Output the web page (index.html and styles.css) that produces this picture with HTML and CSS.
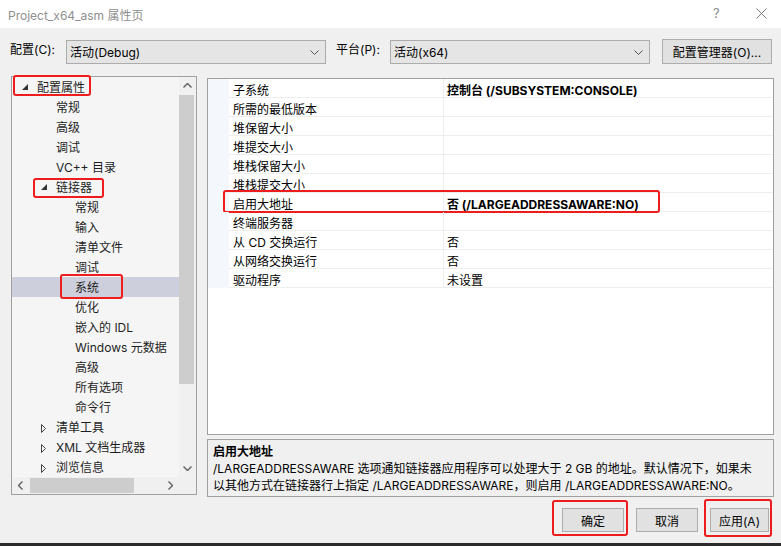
FILE: index.html
```html
<!DOCTYPE html>
<html lang="zh-CN">
<head>
    <meta charset="UTF-8">
    <title>Project_x64_asm 属性页</title>
    <link rel="stylesheet" href="styles.css">
</head>
<body>
    <div class="dialog">
        <div class="titlebar">
            <span class="title">Project_x64_asm 属性页</span>
            <span class="title-help">?</span>
            <span class="title-close">
                <svg width="11" height="11" viewBox="0 0 11 11"><path d="M0.5 0.5 L10.5 10.5 M10.5 0.5 L0.5 10.5" stroke="#7a7a7a" stroke-width="1" fill="none"/></svg>
            </span>
        </div>

        <div class="toolbar">
            <span class="tb-label tb-label-config">配置(C):</span>
            <div class="combo">
                <span>活动(Debug)</span>
                <svg class="chevron" width="9" height="5" viewBox="0 0 9 5"><path d="M0.5 0.5 L4.5 4.5 L8.5 0.5" stroke="#555" fill="none"/></svg>
            </div>
            <span class="tb-label tb-label-platform">平台(P):</span>
            <div class="combo">
                <span>活动(x64)</span>
                <svg class="chevron" width="9" height="5" viewBox="0 0 9 5"><path d="M0.5 0.5 L4.5 4.5 L8.5 0.5" stroke="#555" fill="none"/></svg>
            </div>
            <button class="btn btn-manager">配置管理器(O)...</button>
        </div>

        <div class="main">
            <div class="tree">
                <div class="tree-body">
                    <ul class="tree-list">
                        <li class="lvl0"><span class="twisty"><svg width="6" height="6" viewBox="0 0 6 6"><path d="M6 0 L6 6 L0 6 Z" fill="#333"/></svg></span>配置属性<span class="mark mark-root"></span></li>
                        <li class="lvl1">常规</li>
                        <li class="lvl1">高级</li>
                        <li class="lvl1">调试</li>
                        <li class="lvl1">VC++ 目录</li>
                        <li class="lvl1 has-twisty"><span class="twisty"><svg width="6" height="6" viewBox="0 0 6 6"><path d="M6 0 L6 6 L0 6 Z" fill="#333"/></svg></span>链接器<span class="mark mark-linker"></span></li>
                        <li class="lvl2">常规</li>
                        <li class="lvl2">输入</li>
                        <li class="lvl2">清单文件</li>
                        <li class="lvl2">调试</li>
                        <li class="lvl2 selected">系统<span class="mark mark-system"></span></li>
                        <li class="lvl2">优化</li>
                        <li class="lvl2">嵌入的 IDL</li>
                        <li class="lvl2">Windows 元数据</li>
                        <li class="lvl2">高级</li>
                        <li class="lvl2">所有选项</li>
                        <li class="lvl2">命令行</li>
                        <li class="lvl1 has-twisty"><span class="twisty"><svg class="closed" width="6" height="9" viewBox="0 0 6 9"><path d="M0.5 0.5 L4.5 4.5 L0.5 8.5 Z" stroke="#444" fill="none"/></svg></span>清单工具</li>
                        <li class="lvl1 has-twisty"><span class="twisty"><svg class="closed" width="6" height="9" viewBox="0 0 6 9"><path d="M0.5 0.5 L4.5 4.5 L0.5 8.5 Z" stroke="#444" fill="none"/></svg></span>XML 文档生成器</li>
                        <li class="lvl1 has-twisty"><span class="twisty"><svg class="closed" width="6" height="9" viewBox="0 0 6 9"><path d="M0.5 0.5 L4.5 4.5 L0.5 8.5 Z" stroke="#444" fill="none"/></svg></span>浏览信息</li>
                    </ul>
                    <div class="vscroll">
                        <div class="sb-arrow"><svg width="9" height="5" viewBox="0 0 9 5"><path d="M0.5 4.5 L4.5 0.5 L8.5 4.5" stroke="#606060" stroke-width="1.4" fill="none"/></svg></div>
                        <div class="vthumb"></div>
                        <div class="sb-arrow sb-arrow-down"><svg width="9" height="5" viewBox="0 0 9 5"><path d="M0.5 0.5 L4.5 4.5 L8.5 0.5" stroke="#606060" stroke-width="1.4" fill="none"/></svg></div>
                    </div>
                </div>
                <div class="hscroll">
                    <div class="sb-arrow-h"><svg width="5" height="9" viewBox="0 0 5 9"><path d="M4.5 0.5 L0.5 4.5 L4.5 8.5" stroke="#606060" stroke-width="1.4" fill="none"/></svg></div>
                    <div class="htrack"><div class="hthumb"></div></div>
                    <div class="sb-arrow-h"><svg width="5" height="9" viewBox="0 0 5 9"><path d="M0.5 0.5 L4.5 4.5 L0.5 8.5" stroke="#606060" stroke-width="1.4" fill="none"/></svg></div>
                    <div class="sb-corner"></div>
                </div>
            </div>

            <div class="right">
                <div class="grid">
                    <div class="grid-row"><span class="gutter"></span><span class="cell name">子系统</span><span class="cell value bold">控制台 (/SUBSYSTEM:CONSOLE)</span></div>
                    <div class="grid-row"><span class="gutter"></span><span class="cell name">所需的最低版本</span><span class="cell value"></span></div>
                    <div class="grid-row"><span class="gutter"></span><span class="cell name">堆保留大小</span><span class="cell value"></span></div>
                    <div class="grid-row"><span class="gutter"></span><span class="cell name">堆提交大小</span><span class="cell value"></span></div>
                    <div class="grid-row"><span class="gutter"></span><span class="cell name">堆栈保留大小</span><span class="cell value"></span></div>
                    <div class="grid-row"><span class="gutter"></span><span class="cell name">堆栈提交大小</span><span class="cell value"></span></div>
                    <div class="grid-row"><span class="gutter"></span><span class="cell name">启用大地址</span><span class="cell value bold">否 (/LARGEADDRESSAWARE:NO)</span><span class="mark mark-row"></span></div>
                    <div class="grid-row"><span class="gutter"></span><span class="cell name">终端服务器</span><span class="cell value"></span></div>
                    <div class="grid-row"><span class="gutter"></span><span class="cell name">从 CD 交换运行</span><span class="cell value">否</span></div>
                    <div class="grid-row"><span class="gutter"></span><span class="cell name">从网络交换运行</span><span class="cell value">否</span></div>
                    <div class="grid-row"><span class="gutter"></span><span class="cell name">驱动程序</span><span class="cell value">未设置</span></div>
                </div>
                <div class="desc">
                    <div class="desc-title">启用大地址</div>
                    <div class="desc-text">/LARGEADDRESSAWARE 选项通知链接器应用程序可以处理大于 2 GB 的地址。默认情况下，如果未<br>以其他方式在链接器行上指定 /LARGEADDRESSAWARE，则启用 /LARGEADDRESSAWARE:NO。</div>
                </div>
            </div>
        </div>

        <div class="footer">
            <button class="btn btn-ok">确定<span class="mark mark-ok"></span></button>
            <button class="btn btn-cancel">取消</button>
            <button class="btn btn-apply">应用(A)<span class="mark mark-apply"></span></button>
        </div>
        <div class="taskbar-edge"></div>
    </div>
</body>
</html>
```

FILE: styles.css
```css
html, body {
    margin: 0;
    padding: 0;
    background-color: #f0f0f0;
    font-family: Inter, "Noto Sans CJK SC", sans-serif;
    font-size: 12px;
    color: #000;
}

.dialog {
    width: 781px;
    height: 546px;
    display: flex;
    flex-direction: column;
    overflow: hidden;
}

/* title bar */
.titlebar {
    height: 28px;
    background-color: #ffffff;
    display: flex;
    align-items: center;
    padding-left: 8px;
    flex-shrink: 0;
}
.title {
    color: #8f8f8f;
    font-size: 12px;
    flex: 1;
}
.title-help {
    color: #8a8a8a;
    font-size: 13px;
    width: 12px;
    margin-right: 31px;
    margin-top: -3px;
}
.title-close {
    width: 11px;
    height: 11px;
    margin-right: 14px;
    margin-top: -2px;
    display: flex;
}

/* config row */
.toolbar {
    display: flex;
    align-items: flex-start;
    padding: 12px 0 0 10px;
    height: 24px;
    flex-shrink: 0;
}
.tb-label {
    line-height: 19px;
}
.tb-label-config {
    width: 56px;
}
.tb-label-platform {
    width: 54px;
    margin-left: 10px;
}
.combo {
    width: 260px;
    height: 24px;
    box-sizing: border-box;
    border: 1px solid #acacac;
    background-color: #e5e5e5;
    display: flex;
    align-items: center;
    justify-content: space-between;
    padding: 0 6px 0 3px;
}
.combo span {
    line-height: 20px;
    margin-top: 1px;
}
.btn {
    font-family: inherit;
    font-size: 12px;
    background-color: #e1e1e1;
    border: 1px solid #adadad;
    color: #000;
    padding: 0;
    box-sizing: border-box;
    position: relative;
}
.btn-manager {
    width: 110px;
    height: 25px;
    margin-left: 12px;
    margin-top: -1px;
}

/* main area */
.main {
    display: flex;
    padding-left: 11px;
    margin-top: 12px;
    flex-shrink: 0;
}

.tree {
    width: 186px;
    height: 419px;
    box-sizing: border-box;
    border: 1px solid #a0a0a0;
    background-color: #f5f5f5;
    display: flex;
    flex-direction: column;
}
.tree-body {
    flex: 1;
    display: flex;
    min-height: 0;
}
.tree-list {
    list-style: none;
    margin: 0;
    padding: 0;
    flex: 1;
}
.tree-list li {
    height: 20px;
    line-height: 22px;
    display: flex;
    align-items: flex-start;
    position: relative;
    color: #1e1e1e;
    white-space: nowrap;
}
.tree-list li.lvl0 { padding-left: 10px; }
.tree-list li.lvl1 { padding-left: 44px; }
.tree-list li.lvl1.has-twisty { padding-left: 29px; }
.tree-list li.lvl2 { padding-left: 63px; }
.tree-list li.selected {
    background-color: #cdd0dc;
}
.twisty {
    width: 15px;
    height: 20px;
    display: flex;
    align-items: center;
}
.twisty .closed {
    margin-top: 3px;
}

.vscroll {
    width: 17px;
    display: flex;
    flex-direction: column;
    background-color: #f0f0f0;
}
.sb-arrow {
    height: 17px;
    display: flex;
    align-items: center;
    justify-content: center;
}
.vthumb {
    height: 289px;
    margin: 1px 2px 0 0;
    background-color: #cdcdcd;
}
.sb-arrow-down {
    margin-top: auto;
}
.hscroll {
    height: 17px;
    display: flex;
    background-color: #f0f0f0;
}
.sb-arrow-h {
    width: 17px;
    display: flex;
    align-items: center;
    justify-content: center;
}
.htrack {
    flex: 1;
    padding-top: 1px;
}
.hthumb {
    width: 104px;
    height: 15px;
    margin-left: 1px;
    background-color: #cdcdcd;
}
.sb-corner {
    width: 17px;
}

/* property grid */
.right {
    width: 567px;
    margin-left: 10px;
    padding-top: 2px;
    display: flex;
    flex-direction: column;
}
.grid {
    height: 357px;
    box-sizing: border-box;
    border: 1px solid #a0a0a0;
    background-color: #ffffff;
}
.grid-row {
    display: flex;
    height: 19px;
    position: relative;
}
.gutter {
    width: 21px;
    background-color: #f4f7fb;
    flex-shrink: 0;
}
.cell {
    height: 18px;
    line-height: 23px;
    border-bottom: 1px solid #eeeeee;
    white-space: nowrap;
}
.cell.name {
    width: 210px;
    padding-left: 4px;
    border-right: 1px solid #eeeeee;
}
.cell.value {
    flex: 1;
    padding-left: 3px;
}
.bold {
    font-weight: bold;
}

.desc {
    height: 58px;
    margin-top: 4px;
    box-sizing: border-box;
    border: 1px solid #a0a0a0;
    padding: 3px 0 0 5px;
    line-height: 17px;
    white-space: nowrap;
}
.desc-title {
    font-weight: bold;
}

/* buttons */
.footer {
    display: flex;
    justify-content: flex-end;
    gap: 12px;
    padding-right: 12px;
    margin-top: 11px;
}
.footer .btn {
    width: 62px;
    height: 24px;
}
.footer .btn-apply {
    width: 59px;
}

.taskbar-edge {
    margin-top: auto;
    height: 3px;
    background-color: #2b2b2b;
}

/* red annotation boxes drawn over the screenshot */
.mark {
    position: absolute;
    box-sizing: border-box;
    border: 2px solid #ee1c1c;
    border-radius: 3px;
    pointer-events: none;
}
.mark-root { left: 1px; top: -2px; width: 78px; height: 21px; }
.mark-linker { left: 21px; top: 1px; width: 71px; height: 20px; }
.mark-system { left: 48px; top: -3px; width: 63px; height: 25px; }
.mark-row { left: 15px; top: -3px; width: 437px; height: 23px; }
.mark-ok { left: -11px; top: -9px; width: 76px; height: 36px; }
.mark-apply { left: -7px; top: -10px; width: 68px; height: 38px; }
```
